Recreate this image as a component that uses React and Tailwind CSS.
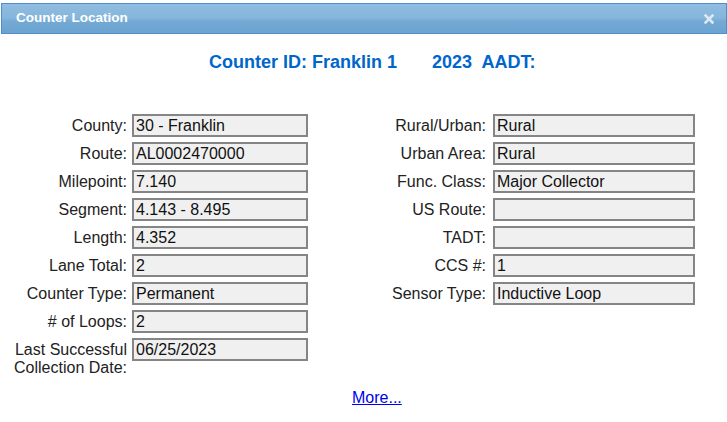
export default function App() {
  const left = [
    ["County:", "30 - Franklin"],
    ["Route:", "AL0002470000"],
    ["Milepoint:", "7.140"],
    ["Segment:", "4.143 - 8.495"],
    ["Length:", "4.352"],
    ["Lane Total:", "2"],
    ["Counter Type:", "Permanent"],
    ["# of Loops:", "2"],
  ];
  const right = [
    ["Rural/Urban:", "Rural"],
    ["Urban Area:", "Rural"],
    ["Func. Class:", "Major Collector"],
    ["US Route:", ""],
    ["TADT:", ""],
    ["CCS #:", "1"],
    ["Sensor Type:", "Inductive Loop"],
  ];

  const box =
    "h-[23px] border-2 border-[#858585] bg-[#f0f0f0] px-[2px] text-[16px] leading-[19px] text-[#111] whitespace-nowrap overflow-hidden";

  return (
    <div className="w-[727px] h-[422px] bg-white font-['Liberation_Sans',Arial,sans-serif] overflow-hidden">
      <div className="pt-[3px] pl-[1px]">
        {/* title bar */}
        <div className="h-[31px] border border-[#4f8ecb] bg-[linear-gradient(to_bottom,#90bde0_0%,#86b6dc_48%,#73a9d4_60%,#6ba3d1_100%)] flex items-center justify-between pl-[14px] pr-[12px]">
          <span className="text-white font-bold text-[13.5px]">Counter Location</span>
          <svg width="10" height="10" viewBox="0 0 10 10">
            <path d="M1.5 1.5 L8.5 8.5 M8.5 1.5 L1.5 8.5" stroke="#dce9f5" strokeWidth="2.6" strokeLinecap="square" />
          </svg>
        </div>
      </div>

      {/* header */}
      <div className="pl-[209px] pt-[18px] flex items-center gap-[35px] text-[18px] font-bold text-[#0066cc] leading-[20px]">
        <span>Counter ID: Franklin 1</span>
        <span className="whitespace-pre">2023  AADT:</span>
      </div>

      <div className="flex mt-[42px]">
        {/* left column */}
        <div className="grid grid-cols-[127px_176px] gap-x-[5px] gap-y-[5px] w-[380px]">
          {left.map(([l, v]) => (
            <div key={l} className="contents">
              <div className="h-[23px] flex items-center justify-end text-[16px] text-[#222]">{l}</div>
              <div className={box}>{v}</div>
            </div>
          ))}
          <div className="text-right text-[16px] leading-[18px] pt-[3px] text-[#222]">
            Last Successful
            <br />
            Collection Date:
          </div>
          <div className={box}>06/25/2023</div>
        </div>

        {/* right column */}
        <div className="grid grid-cols-[106px_202px] gap-x-[7px] gap-y-[5px] content-start">
          {right.map(([l, v]) => (
            <div key={l} className="contents">
              <div className="h-[23px] flex items-center justify-end text-[16px] text-[#222] whitespace-nowrap">{l}</div>
              <div className={box}>{v}</div>
            </div>
          ))}
        </div>
      </div>

      <div className="pl-[352px] mt-[9px]">
        <a href="#" className="text-[16px] text-[#0000ee] underline">More...</a>
      </div>
    </div>
  );
}
